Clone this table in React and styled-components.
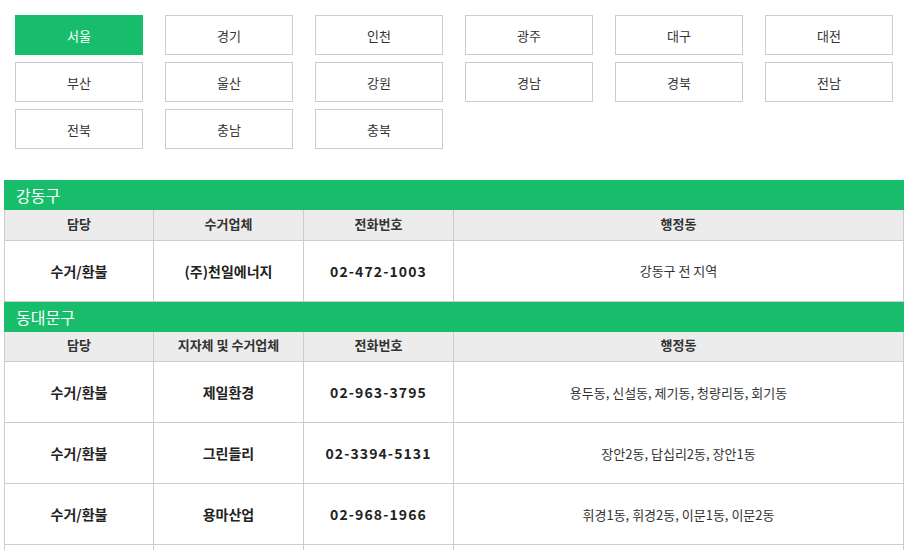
import React from "react";
import styled, { createGlobalStyle } from "styled-components";

const Global = createGlobalStyle`
  html, body { margin: 0; padding: 0; background: #fff; }
  body { font-family: "Noto Sans CJK KR", "Noto Sans", sans-serif; color: #333; }
`;

const GREEN = "#18bd6b";

const Page = styled.div`
  width: 909px;
`;

const RegionGrid = styled.div`
  display: grid;
  grid-template-columns: repeat(6, 128px);
  column-gap: 22px;
  row-gap: 7px;
  padding: 15px 15px 0;
`;

const RegionButton = styled.button`
  box-sizing: border-box;
  height: 40px;
  border: 1px solid ${(p) => (p.$active ? GREEN : "#cccccc")};
  background: ${(p) => (p.$active ? GREEN : "#fff")};
  color: ${(p) => (p.$active ? "#fff" : "#333")};
  font-family: inherit;
  font-size: 13px;
  padding: 0;
  cursor: pointer;
`;

const Sections = styled.div`
  margin: 31px 4px 0;
  width: 900px;
`;

const Title = styled.div`
  height: 30px;
  background: ${GREEN};
  color: #fff;
  font-size: 16px;
  line-height: 30px;
  padding-left: 12px;
`;

const Table = styled.table`
  width: 900px;
  border-collapse: collapse;
  table-layout: fixed;
`;

const Col = styled.col`
  width: ${(p) => p.$w || "auto"};
`;

const Th = styled.th`
  height: 30px;
  background: #ececec;
  border: 1px solid #cccccc;
  border-top: none;
  font-size: 13px;
  font-weight: 700;
  color: #333;
  padding: 0 0 3px;
  box-sizing: border-box;
`;

const Td = styled.td`
  height: 60px;
  border: 1px solid #cccccc;
  text-align: center;
  font-size: ${(p) => (p.$plain ? "13px" : "14px")};
  font-weight: ${(p) => (p.$plain ? 400 : 700)};
  color: ${(p) => (p.$plain ? "#333" : "#222")};
  letter-spacing: ${(p) => (p.$phone ? "1.1px" : "0")};
  padding: 0;
`;

const regions = [
  "서울", "경기", "인천", "광주", "대구", "대전",
  "부산", "울산", "강원", "경남", "경북", "전남",
  "전북", "충남", "충북",
];

const data = [
  {
    name: "강동구",
    companyHeader: "수거업체",
    rows: [["수거/환불", "(주)천일에너지", "02-472-1003", "강동구 전 지역"]],
  },
  {
    name: "동대문구",
    companyHeader: "지자체 및 수거업체",
    rows: [
      ["수거/환불", "제일환경", "02-963-3795", "용두동, 신설동, 제기동, 청량리동, 회기동"],
      ["수거/환불", "그린들리", "02-3394-5131", "장안2동, 답십리2동, 장안1동"],
      ["수거/환불", "용마산업", "02-968-1966", "휘경1동, 휘경2동, 이문1동, 이문2동"],
      ["", "", "", ""],
    ],
  },
];

export default function App() {
  return (
    <Page>
      <Global />
      <RegionGrid>
        {regions.map((r, i) => (
          <RegionButton key={r} $active={i === 0}>{r}</RegionButton>
        ))}
      </RegionGrid>
      <Sections>
        {data.map((s) => (
          <section key={s.name}>
            <Title>{s.name}</Title>
            <Table>
              <colgroup>
                <Col $w="149px" />
                <Col $w="150px" />
                <Col $w="150px" />
                <Col />
              </colgroup>
              <thead>
                <tr>
                  <Th>담당</Th>
                  <Th>{s.companyHeader}</Th>
                  <Th>전화번호</Th>
                  <Th>행정동</Th>
                </tr>
              </thead>
              <tbody>
                {s.rows.map((r, i) => (
                  <tr key={i}>
                    <Td>{r[0]}</Td>
                    <Td>{r[1]}</Td>
                    <Td $phone>{r[2]}</Td>
                    <Td $plain>{r[3]}</Td>
                  </tr>
                ))}
              </tbody>
            </Table>
          </section>
        ))}
      </Sections>
    </Page>
  );
}
